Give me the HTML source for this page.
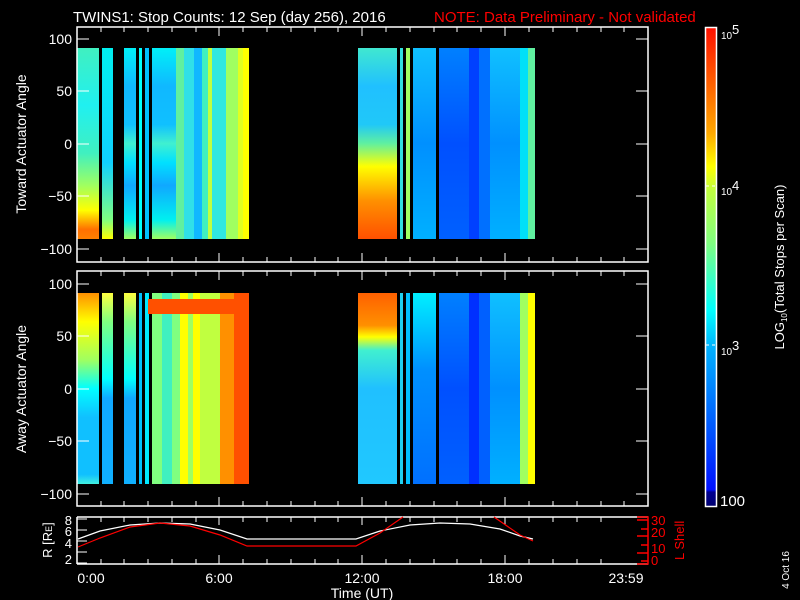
<!DOCTYPE html>
<html><head><style>
html,body{margin:0;padding:0;background:#000;width:800px;height:600px;overflow:hidden}
svg text{font-family:"Liberation Sans",sans-serif;fill:#fff}
</style></head><body>
<svg width="800" height="600" xmlns="http://www.w3.org/2000/svg">
<defs>
<linearGradient id="cb" x1="0" y1="0" x2="0" y2="1">
<stop offset="0" stop-color="#ff1000"/><stop offset="0.14" stop-color="#ff7000"/><stop offset="0.22" stop-color="#ffa800"/><stop offset="0.29" stop-color="#ffff00"/><stop offset="0.34" stop-color="#c0ff40"/><stop offset="0.45" stop-color="#80ff80"/><stop offset="0.52" stop-color="#40ffc0"/><stop offset="0.59" stop-color="#00ffff"/><stop offset="0.67" stop-color="#00b0ff"/><stop offset="0.85" stop-color="#0050ff"/><stop offset="0.965" stop-color="#0010ff"/><stop offset="0.97" stop-color="#000090"/><stop offset="1" stop-color="#000070"/>
</linearGradient>
<linearGradient id="t1" x1="0" y1="0" x2="0" y2="1">
<stop offset="0" stop-color="#40f0c0"/><stop offset="0.3" stop-color="#20f0f0"/><stop offset="0.55" stop-color="#40f0c0"/><stop offset="0.72" stop-color="#a0ff60"/><stop offset="0.85" stop-color="#ffff00"/><stop offset="0.95" stop-color="#ff7000"/><stop offset="1" stop-color="#ff8000"/></linearGradient>
<linearGradient id="t2" x1="0" y1="0" x2="0" y2="1">
<stop offset="0" stop-color="#00f0f0"/><stop offset="0.6" stop-color="#10d0ff"/><stop offset="0.9" stop-color="#80ff80"/><stop offset="1" stop-color="#ffff00"/></linearGradient>
<linearGradient id="tc" x1="0" y1="0" x2="0" y2="1">
<stop offset="0" stop-color="#00f0f8"/><stop offset="0.2" stop-color="#10b8ff"/><stop offset="0.4" stop-color="#10c0ff"/><stop offset="0.5" stop-color="#40f0d0"/><stop offset="0.6" stop-color="#00e0ff"/><stop offset="0.72" stop-color="#10a8ff"/><stop offset="0.9" stop-color="#00f0f0"/><stop offset="1" stop-color="#a0ff60"/></linearGradient>
<linearGradient id="sl" x1="0" y1="0" x2="0" y2="1">
<stop offset="0" stop-color="#40e8d0"/><stop offset="0.2" stop-color="#20c0ff"/><stop offset="0.4" stop-color="#20c8f8"/><stop offset="0.5" stop-color="#60f0a0"/><stop offset="0.62" stop-color="#ffff00"/><stop offset="0.8" stop-color="#ff9000"/><stop offset="1" stop-color="#ff5000"/></linearGradient>
<linearGradient id="sb" x1="0" y1="0" x2="0" y2="1">
<stop offset="0" stop-color="#10c0ff"/><stop offset="0.5" stop-color="#0090ff"/><stop offset="1" stop-color="#00b0ff"/></linearGradient>
<linearGradient id="sd" x1="0" y1="0" x2="0" y2="1">
<stop offset="0" stop-color="#0080ff"/><stop offset="0.5" stop-color="#0050ff"/><stop offset="1" stop-color="#0060ff"/></linearGradient>
<linearGradient id="a1" x1="0" y1="0" x2="0" y2="1">
<stop offset="0" stop-color="#ff9000"/><stop offset="0.15" stop-color="#ffff00"/><stop offset="0.35" stop-color="#a0ff60"/><stop offset="0.5" stop-color="#00ffff"/><stop offset="0.65" stop-color="#10c0ff"/><stop offset="0.95" stop-color="#10c0ff"/><stop offset="1" stop-color="#40f0e0"/></linearGradient>
<linearGradient id="a2" x1="0" y1="0" x2="0" y2="1">
<stop offset="0" stop-color="#ffff40"/><stop offset="0.15" stop-color="#80ff80"/><stop offset="0.45" stop-color="#00ffff"/><stop offset="0.55" stop-color="#10a8ff"/><stop offset="1" stop-color="#10b0ff"/></linearGradient>
<linearGradient id="as" x1="0" y1="0" x2="0" y2="1">
<stop offset="0" stop-color="#ff6000"/><stop offset="0.17" stop-color="#ff9000"/><stop offset="0.23" stop-color="#ffff00"/><stop offset="0.3" stop-color="#40f0d0"/><stop offset="0.5" stop-color="#20c0ff"/><stop offset="1" stop-color="#20c8ff"/></linearGradient>
<linearGradient id="ab" x1="0" y1="0" x2="0" y2="1">
<stop offset="0" stop-color="#00f0ff"/><stop offset="0.4" stop-color="#0090ff"/><stop offset="1" stop-color="#0070ff"/></linearGradient>
</defs>

<text x="73" y="22" font-size="15">TWINS1: Stop Counts: 12 Sep (day 256), 2016</text>
<text x="434" y="22" font-size="15" style="fill:#ff0000">NOTE: Data Preliminary - Not validated</text>

<!-- top panel data -->
<g>
<rect x="77" y="48" width="22" height="191" fill="url(#t1)"/>
<rect x="102" y="48" width="11" height="191" fill="url(#t2)"/>
<rect x="124" y="48" width="12" height="191" fill="url(#tc)"/>
<rect x="139" y="48" width="3" height="191" fill="#00ffff"/>
<rect x="145" y="48" width="4" height="191" fill="#00c0ff"/>
<rect x="152" y="48" width="24" height="191" fill="url(#tc)"/>
<rect x="176" y="48" width="8" height="191" fill="#60f0a0"/>
<rect x="184" y="48" width="10" height="191" fill="#30e0e8"/>
<rect x="194" y="48" width="8" height="191" fill="#10b8ff"/>
<rect x="202" y="48" width="6" height="191" fill="#40f0c0"/>
<rect x="208" y="48" width="4" height="191" fill="#c0ff40"/>
<rect x="212" y="48" width="14" height="191" fill="#30e8e0"/>
<rect x="226" y="48" width="12" height="191" fill="#a0ff60"/>
<rect x="238" y="48" width="5" height="191" fill="#e0ff20"/>
<rect x="243" y="48" width="6" height="191" fill="#ffff00"/>
<rect x="358" y="48" width="39" height="191" fill="url(#sl)"/>
<rect x="400" y="48" width="3" height="191" fill="#30e0e0"/>
<rect x="406" y="48" width="4" height="191" fill="#a0ff60"/>
<rect x="413" y="48" width="23" height="191" fill="url(#sb)"/>
<rect x="439" y="48" width="30" height="191" fill="url(#sd)"/>
<rect x="469" y="48" width="10" height="191" fill="#0040ff"/>
<rect x="479" y="48" width="11" height="191" fill="#0070ff"/>
<rect x="490" y="48" width="30" height="191" fill="url(#sb)"/>
<rect x="520" y="48" width="8" height="191" fill="#00e0f8"/>
<rect x="528" y="48" width="7" height="191" fill="#60f0a0"/>
</g>
<!-- bottom panel data -->
<g>
<rect x="77" y="293" width="22" height="191" fill="url(#a1)"/>
<rect x="102" y="293" width="11" height="191" fill="url(#a2)"/>
<rect x="124" y="293" width="12" height="191" fill="url(#a2)"/>
<rect x="139" y="293" width="3" height="191" fill="#00c0ff"/>
<rect x="145" y="293" width="4" height="191" fill="#00e8ff"/>
<rect x="152" y="293" width="28" height="191" fill="#80ff80"/>
<rect x="162" y="293" width="10" height="191" fill="#40f0c0"/>
<rect x="180" y="293" width="20" height="191" fill="#ffff00"/>
<rect x="188" y="293" width="5" height="191" fill="#a0ff60"/>
<rect x="200" y="293" width="20" height="191" fill="#c0ff40"/>
<rect x="220" y="293" width="14" height="191" fill="#ff9000"/>
<rect x="234" y="293" width="15" height="191" fill="#ff5000"/>
<rect x="148" y="299" width="101" height="15" fill="#ff5000"/>
<rect x="358" y="293" width="39" height="191" fill="url(#as)"/>
<rect x="400" y="293" width="3" height="191" fill="#20d0f0"/>
<rect x="406" y="293" width="4" height="191" fill="#00c0ff"/>
<rect x="413" y="293" width="23" height="191" fill="url(#ab)"/>
<rect x="439" y="293" width="30" height="191" fill="url(#sd)"/>
<rect x="469" y="293" width="10" height="191" fill="#0030ff"/>
<rect x="479" y="293" width="11" height="191" fill="#0060ff"/>
<rect x="490" y="293" width="30" height="191" fill="url(#sb)"/>
<rect x="520" y="293" width="8" height="191" fill="#a0ff60"/>
<rect x="528" y="293" width="7" height="191" fill="#ffff00"/>
</g>

<!-- axes -->
<g stroke="#fff" stroke-width="1.5" fill="none">
<rect x="77" y="27" width="571" height="235"/>
<rect x="77" y="271" width="571" height="235"/>
<path d="M77 517 H648 M77 564 H648 M77 517 V564"/>
</g>
<g stroke="#fff" stroke-width="1">
<path d="M77 39h12M77 91h12M77 144h12M77 196h12M77 249h12M636 39h12M636 91h12M636 144h12M636 196h12M636 249h12
M77 284h12M77 336h12M77 389h12M77 441h12M77 494h12M636 284h12M636 336h12M636 389h12M636 441h12M636 494h12"/>
<path d="M101 27v5M124 27v5M148 27v5M172 27v5M196 27v5M243 27v5M267 27v5M291 27v5M315 27v5M338 27v5M386 27v5M410 27v5M434 27v5M457 27v5M481 27v5M529 27v5M553 27v5M577 27v5M601 27v5M624 27v5M219 27v9M362 27v9M505 27v9
M101 262v-5M124 262v-5M148 262v-5M172 262v-5M196 262v-5M243 262v-5M267 262v-5M291 262v-5M315 262v-5M338 262v-5M386 262v-5M410 262v-5M434 262v-5M457 262v-5M481 262v-5M529 262v-5M553 262v-5M577 262v-5M601 262v-5M624 262v-5M219 262v-9M362 262v-9M505 262v-9"/>
<path d="M101 271v5M124 271v5M148 271v5M172 271v5M196 271v5M243 271v5M267 271v5M291 271v5M315 271v5M338 271v5M386 271v5M410 271v5M434 271v5M457 271v5M481 271v5M529 271v5M553 271v5M577 271v5M601 271v5M624 271v5M219 271v9M362 271v9M505 271v9
M101 506v-5M124 506v-5M148 506v-5M172 506v-5M196 506v-5M243 506v-5M267 506v-5M291 506v-5M315 506v-5M338 506v-5M386 506v-5M410 506v-5M434 506v-5M457 506v-5M481 506v-5M529 506v-5M553 506v-5M577 506v-5M601 506v-5M624 506v-5M219 506v-9M362 506v-9M505 506v-9"/>
<path d="M101 517v5M124 517v5M148 517v5M172 517v5M196 517v5M243 517v5M267 517v5M291 517v5M315 517v5M338 517v5M386 517v5M410 517v5M434 517v5M457 517v5M481 517v5M529 517v5M553 517v5M577 517v5M601 517v5M219 517v8M362 517v8M505 517v8
M101 564v-5M124 564v-5M148 564v-5M172 564v-5M196 564v-5M243 564v-5M267 564v-5M291 564v-5M315 564v-5M338 564v-5M386 564v-5M410 564v-5M434 564v-5M457 564v-5M481 564v-5M529 564v-5M553 564v-5M577 564v-5M601 564v-5M219 564v-9M362 564v-9M505 564v-9
M77 519h10M77 530h10M77 541h10M77 552h10M77 563h10"/>
</g>
<g stroke="#f00" stroke-width="1.5" fill="none">
<path d="M637 517H648V564H637M637 520h11M641 529h7M637 536h11M641 545h7M637 553h11M641 561h7"/>
</g>
<!-- orbit lines -->
<polyline fill="none" stroke="#fff" stroke-width="1.2" points="78,539 100,531 130,525 160,523 190,524 220,530 247,539 356,539 380,531 410,525 440,523 470,524 500,529 520,536 533,539"/>
<polyline fill="none" stroke="#f00" stroke-width="1.2" points="78,547 100,538 130,527 160,523 190,526 220,535 247,546 356,546 380,533 403,517"/>
<polyline fill="none" stroke="#f00" stroke-width="1.2" points="494,517 520,535 533,541"/>

<!-- labels -->
<g font-size="14" text-anchor="end">
<text x="72" y="44">100</text><text x="72" y="96">50</text><text x="72" y="149">0</text><text x="72" y="201">−50</text><text x="72" y="254">−100</text>
<text x="72" y="289">100</text><text x="72" y="341">50</text><text x="72" y="394">0</text><text x="72" y="446">−50</text><text x="72" y="499">−100</text>
<text x="72" y="525" font-size="13">8</text><text x="72" y="536" font-size="13">6</text><text x="72" y="548" font-size="13">4</text><text x="72" y="564" font-size="13">2</text>
</g>
<g font-size="13">
<text x="651" y="525" style="fill:#f00">30</text><text x="651" y="537" style="fill:#f00">20</text><text x="651" y="553" style="fill:#f00">10</text><text x="651" y="565" style="fill:#f00">0</text>
<text transform="translate(684,560) rotate(-90)" style="fill:#f00">L Shell</text>
</g>
<g font-size="14" text-anchor="middle">
<text x="91" y="583">0:00</text><text x="219" y="583">6:00</text><text x="362" y="583">12:00</text><text x="505" y="583">18:00</text><text x="626" y="583">23:59</text>
<text x="362" y="598">Time (UT)</text>
<text transform="translate(26,144) rotate(-90)">Toward Actuator Angle</text>
<text transform="translate(26,389) rotate(-90)">Away Actuator Angle</text>
<text transform="translate(52,540) rotate(-90)" font-size="13">R [R<tspan font-size="9">E</tspan>]</text>
<text transform="translate(784,267) rotate(-90)" font-size="13">LOG<tspan font-size="8" dy="3">10</tspan><tspan dy="-3">(Total Stops per Scan)</tspan></text>
<text transform="translate(789,570) rotate(-90)" font-size="10">4 Oct 16</text>
</g>
<!-- colorbar -->
<rect x="705.5" y="27.5" width="11" height="479" fill="url(#cb)" stroke="#fff" stroke-width="1.5"/>
<path d="M706 186h3M712 186h3M706 345h3M712 345h3" stroke="#fff"/>
<g font-size="10"><text x="721" y="39">10</text><text x="732" y="34" font-size="13">5</text>
<text x="721" y="195">10</text><text x="732" y="190" font-size="13">4</text>
<text x="721" y="355">10</text><text x="732" y="350" font-size="13">3</text>
<text x="720" y="506" font-size="15">100</text></g>
</svg>
</body></html>
